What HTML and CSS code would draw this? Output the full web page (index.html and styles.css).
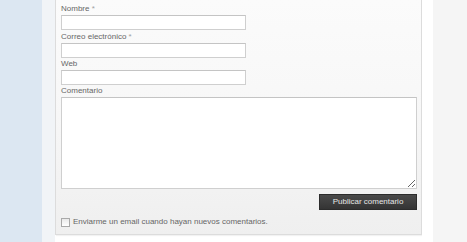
FILE: index.html
```html
<!DOCTYPE html>
<html lang="es">
<head>
<meta charset="utf-8">
<title>Comentario</title>
<link rel="stylesheet" href="styles.css">
</head>
<body>
<div class="page">
  <div class="side"></div>
  <div class="gutter"></div>
  <div class="main">
    <form class="panel">
      <label class="lbl l1">Nombre <span class="req">*</span></label>
      <input class="txt" type="text">
      <label class="lbl l2">Correo electrónico <span class="req">*</span></label>
      <input class="txt" type="text">
      <label class="lbl l3">Web</label>
      <input class="txt" type="text">
      <label class="lbl l4">Comentario</label>
      <textarea class="area"></textarea>
      <div class="actions">
        <button class="btn" type="button">Publicar comentario</button>
      </div>
      <div class="notify">
        <span class="box"></span>
        <span class="ntext">Enviarme un email cuando hayan nuevos comentarios.</span>
      </div>
    </form>
  </div>
  <div class="gap"></div>
  <div class="aside"></div>
</div>
</body>
</html>
```
FILE: styles.css
```css
html, body {
  margin: 0;
  padding: 0;
  background: #ffffff;
}
.page {
  display: flex;
  width: 467px;
  height: 242px;
  overflow: hidden;
  font-family: "Liberation Sans", Arial, sans-serif;
}
.side {
  width: 42px;
  flex: none;
  background: #dce7f2;
}
.gutter {
  width: 13px;
  flex: none;
  background: #f1f4f7;
}
.main {
  width: 367px;
  flex: none;
  background: #ffffff;
}
.panel {
  box-sizing: border-box;
  width: 367px;
  height: 235px;
  margin: 0;
  padding: 2px 5px 0 5px;
  border: 1px solid #dcdcdc;
  border-top: none;
  background: linear-gradient(#fbfbfb, #f7f7f7 50%, #efefef);
  box-shadow: 1px 1px 1px rgba(0,0,0,0.05);
  display: flex;
  flex-direction: column;
  align-items: flex-start;
}
.lbl {
  display: block;
  font-size: 8px;
  color: #666666;
  line-height: 12px;
  height: 12px;
}
.l1, .l2 {
  line-height: 13px;
  height: 13px;
}
.req {
  color: #a0a0a0;
}
.txt {
  box-sizing: border-box;
  width: 185px;
  height: 15px;
  margin: 0;
  padding: 0 2px;
  border: 1px solid #cfcfcf;
  border-top-color: #c4c4c4;
  background: #ffffff;
  font-size: 8px;
}
.area {
  box-sizing: border-box;
  width: 356px;
  height: 92px;
  margin: 0;
  padding: 2px;
  border: 1px solid #cfcfcf;
  border-top-color: #c4c4c4;
  background: #ffffff;
  resize: vertical;
  font-size: 8px;
}
.actions {
  width: 356px;
  display: flex;
  justify-content: flex-end;
  margin-top: 5px;
}
.btn {
  box-sizing: border-box;
  width: 98px;
  height: 16px;
  margin: 0;
  padding: 0;
  border: 1px solid #2c2c2c;
  background: linear-gradient(#4a4a4a, #343434);
  color: #e6e6e6;
  font-family: "Liberation Sans", Arial, sans-serif;
  font-size: 8px;
  line-height: 14px;
}
.notify {
  display: flex;
  align-items: center;
  gap: 3px;
  margin-top: 7px;
  height: 10px;
}
.box {
  box-sizing: border-box;
  width: 9px;
  height: 9px;
  border: 1px solid #a9a9a9;
  background: linear-gradient(#e9e9e9, #ffffff);
}
.ntext {
  font-size: 8px;
  color: #666666;
  line-height: 10px;
}
.gap {
  width: 11px;
  flex: none;
  background: #ffffff;
}
.aside {
  flex: 1;
  background: #f5f5f5;
}
```
